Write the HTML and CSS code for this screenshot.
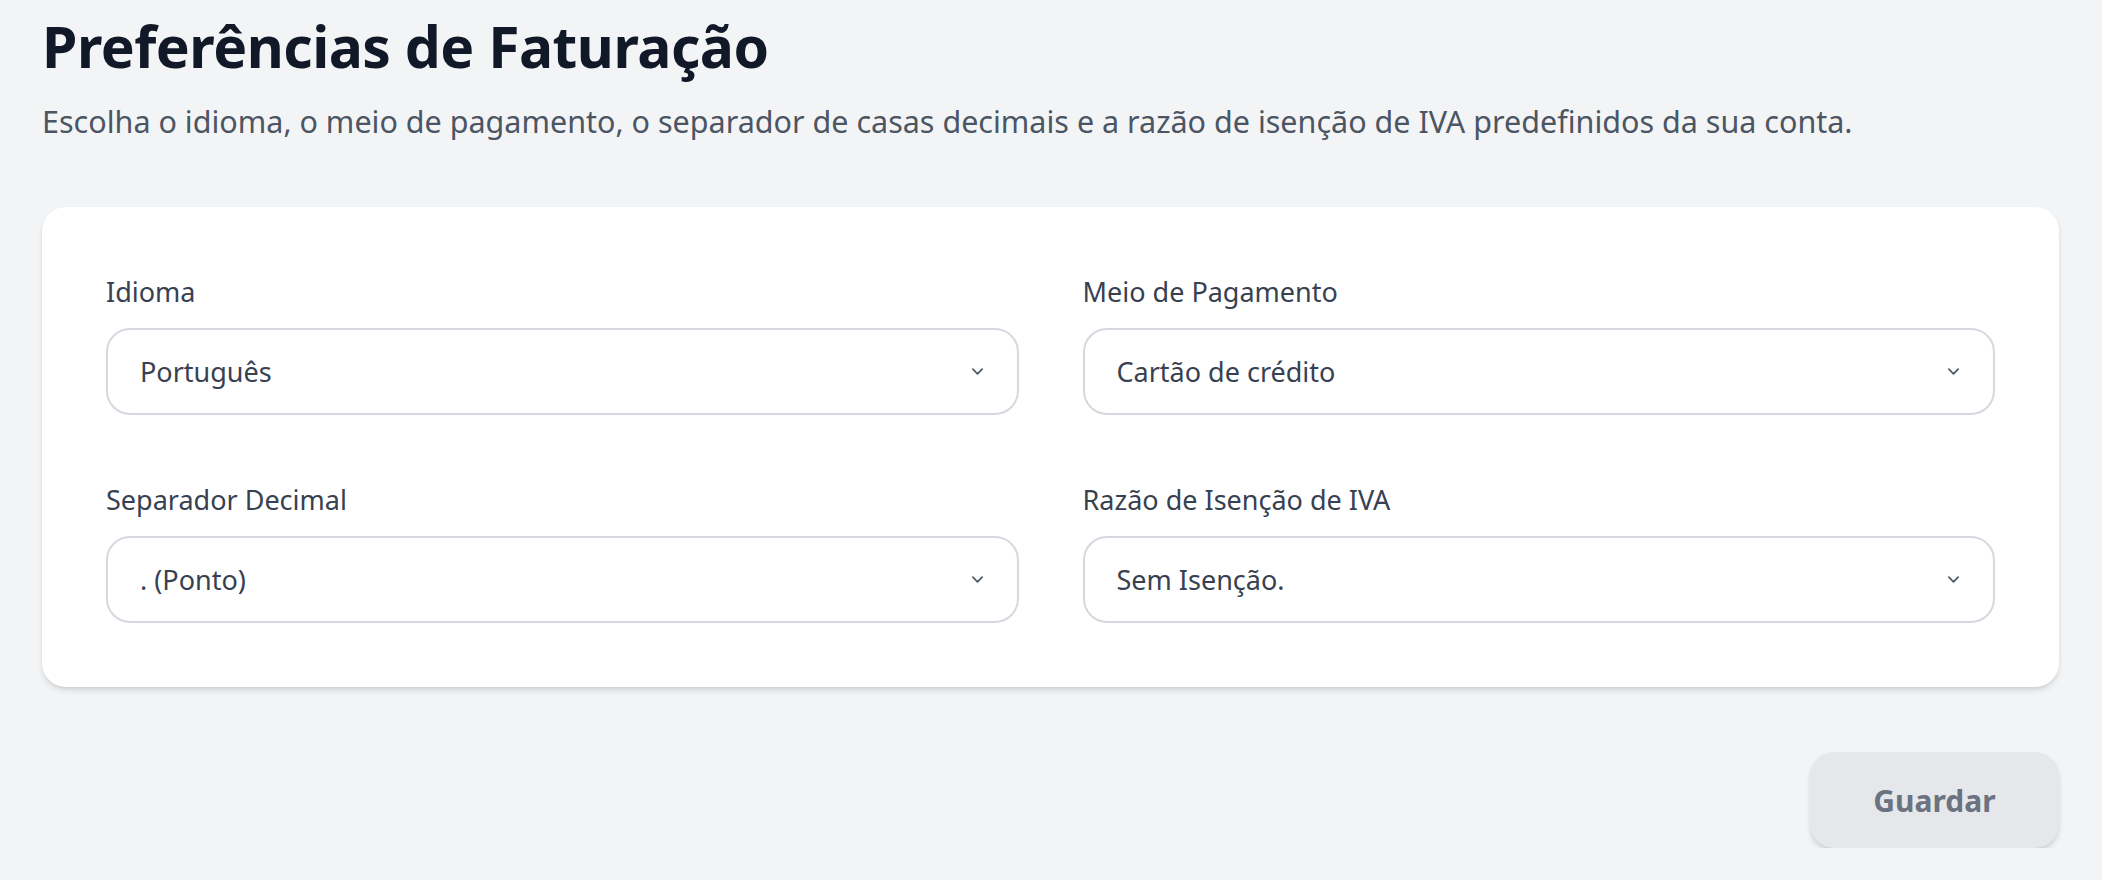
FILE: index.html
```html
<!DOCTYPE html>
<html lang="pt">
<head>
<meta charset="utf-8">
<title>Preferências de Faturação</title>
<link rel="stylesheet" href="styles.css">
</head>
<body>
<main class="page">
  <h1 class="title">Preferências de Faturação</h1>
  <p class="subtitle">Escolha o idioma, o meio de pagamento, o separador de casas decimais e a razão de isenção de IVA predefinidos da sua conta.</p>

  <section class="card">
    <div class="grid">
      <div class="field">
        <label class="label">Idioma</label>
        <div class="select">
          <span class="value">Português</span>
          <svg class="chev" width="12" height="7" viewBox="0 0 12 7"><path d="M1 1l5 5 5-5" fill="none" stroke="#4b5563" stroke-width="1.8" stroke-linecap="round" stroke-linejoin="round"/></svg>
        </div>
      </div>
      <div class="field">
        <label class="label">Meio de Pagamento</label>
        <div class="select">
          <span class="value">Cartão de crédito</span>
          <svg class="chev" width="12" height="7" viewBox="0 0 12 7"><path d="M1 1l5 5 5-5" fill="none" stroke="#4b5563" stroke-width="1.8" stroke-linecap="round" stroke-linejoin="round"/></svg>
        </div>
      </div>
      <div class="field">
        <label class="label">Separador Decimal</label>
        <div class="select">
          <span class="value">. (Ponto)</span>
          <svg class="chev" width="12" height="7" viewBox="0 0 12 7"><path d="M1 1l5 5 5-5" fill="none" stroke="#4b5563" stroke-width="1.8" stroke-linecap="round" stroke-linejoin="round"/></svg>
        </div>
      </div>
      <div class="field">
        <label class="label">Razão de Isenção de IVA</label>
        <div class="select">
          <span class="value">Sem Isenção.</span>
          <svg class="chev" width="12" height="7" viewBox="0 0 12 7"><path d="M1 1l5 5 5-5" fill="none" stroke="#4b5563" stroke-width="1.8" stroke-linecap="round" stroke-linejoin="round"/></svg>
        </div>
      </div>
    </div>
  </section>

  <div class="actions">
    <button class="btn" type="button">Guardar</button>
  </div>
</main>
</body>
</html>
```

FILE: styles.css
```css
* { box-sizing: border-box; }

html, body {
  margin: 0;
  padding: 0;
  background: #f3f4f6;
  font-family: "Noto Sans", "Open Sans", sans-serif;
}

.page {
  padding: 10px 43px 0 42px;
}

.title {
  margin: 0;
  font-size: 57px;
  line-height: 72px;
  font-weight: 700;
  color: #111827;
  letter-spacing: -0.5px;
}

.subtitle {
  margin: 19px 0 0;
  font-size: 30.5px;
  line-height: 40px;
  color: #4b5563;
}

.card {
  margin-top: 66px;
  background: #ffffff;
  border-radius: 24px;
  padding: 64px;
  box-shadow: 0 4px 6px -1px rgba(0, 0, 0, 0.12), 0 2px 4px -2px rgba(0, 0, 0, 0.1);
}

.grid {
  display: grid;
  grid-template-columns: 1fr 1fr;
  column-gap: 64px;
  row-gap: 64px;
}

.field {
  display: flex;
  flex-direction: column;
}

.label {
  font-size: 27px;
  line-height: 42px;
  color: #374151;
  margin-bottom: 15px;
}

.select {
  height: 87px;
  border: 2px solid #d5d8de;
  border-radius: 24px;
  display: flex;
  align-items: center;
  justify-content: space-between;
  padding: 0 34px 0 32px;
  background: #fff;
}

.value {
  font-size: 27px;
  line-height: 40px;
  color: #374151;
}

.chev {
  width: 11px;
  height: 7px;
}

.actions {
  display: flex;
  justify-content: flex-end;
  margin-top: 65px;
}

.btn {
  width: 249px;
  height: 96px;
  border: none;
  border-radius: 24px;
  background: #e5e7eb;
  color: #6b7280;
  font-family: "Noto Sans", "Open Sans", sans-serif;
  font-size: 30px;
  font-weight: 700;
  box-shadow: 0 4px 6px -1px rgba(0, 0, 0, 0.14), 0 2px 4px -2px rgba(0, 0, 0, 0.1);
  cursor: pointer;
}
```
